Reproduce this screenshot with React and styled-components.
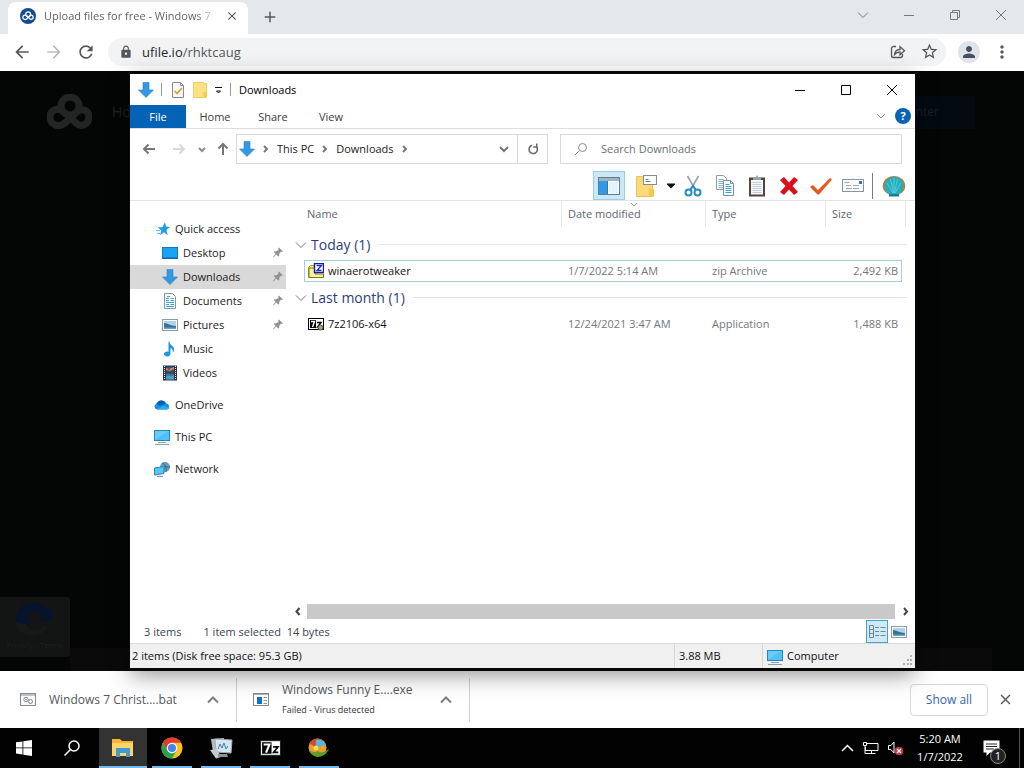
import React, { Fragment } from "react";
import styled, { createGlobalStyle } from "styled-components";
import {
  MdArrowBack,
  MdArrowForward,
  MdRefresh,
  MdLock,
  MdPerson,
  MdMoreVert,
  MdStarBorder,
  MdAdd,
  MdClose,
} from "react-icons/md";

const GlobalStyle = createGlobalStyle`
  * {
    box-sizing: border-box;
  }
  body {
    margin: 0;
    font-family: "Open Sans", "Noto Sans", sans-serif;
    font-size: 11px;
    line-height: 16px;
    color: #1b1b1b;
    overflow: hidden;
  }
  button, input {
    font: inherit;
    color: inherit;
  }
  svg {
    display: block;
    flex: none;
  }
`;

/* ---------- icons ---------- */

const Line = ({ d, w = 12, h = w, stroke = "currentColor", sw = 1 }) => (
  <svg width={w} height={h} viewBox={`0 0 ${w} ${h}`} fill="none" stroke={stroke} strokeWidth={sw}>
    <path d={d} />
  </svg>
);

const CloudLogo = ({ size, color, sw }) => (
  <svg width={size} height={size * 0.8} viewBox="0 0 45 36" fill="none" stroke={color} strokeWidth={sw}>
    <circle cx="23" cy="12" r="9" />
    <path d="M17 18 L29 29 C34 34 42 30 42 23 C42 17 36 14 31 17 L18 29 C11 35 3 30 3 23 C3 17 9 13 15 17" />
  </svg>
);

const DownArrow = ({ size = 16 }) => (
  <svg width={size} height={size} viewBox="0 0 16 16">
    <path d="M5 0.5h6V8h4.5L8 15.5 0.5 8H5z" fill="#3598e4" stroke="#2b7fc4" strokeWidth="0.6" />
  </svg>
);

const CheckPage = () => (
  <svg width="16" height="16" viewBox="0 0 16 16">
    <path d="M2.5 0.5h8l3 3v12h-11z" fill="#f8f8f8" stroke="#8a8a8a" />
    <path d="M10.5 0.5v3h3" fill="none" stroke="#8a8a8a" />
    <path d="M4.5 9l2.500 2.500 5-5.500" fill="none" stroke="#d6a02a" strokeWidth="1.600" />
  </svg>
);

const Folder = () => (
  <svg width="14" height="16" viewBox="0 0 14 16">
    <path d="M0.5 0.5h10v1h3v14H0.5z" fill="#fedf82" stroke="#eccb6a" />
    <path d="M10.5 10h3v5.5h-3z" fill="#f7cb51" />
  </svg>
);

const Monitor = () => (
  <svg width="16" height="16" viewBox="0 0 16 16">
    <rect x="0.5" y="1.5" width="15" height="10" fill="#4fc0f8" stroke="#2487b8" />
    <path d="M1 11V2h13z" fill="#7bd2fb" opacity="0.6" />
    <path d="M4 13.5h8M1 15.5h14" stroke="#8aa0ac" />
  </svg>
);

const sideIcons = {
  star: (
    <svg width="16" height="16" viewBox="-2 0 16 16">
      <path d="M9 1l1 4.600 4 .4-3.600 3 1.300 5.200L8 11.200 4 14.200l1.300-4.700L2 6.400l4.600-.4z" fill="#1f9bea" />
      <path d="M0 9.500h4M1 12.500h3M2 6.500h3" stroke="#5bb7f0" />
    </svg>
  ),
  desktop: (
    <svg width="16" height="14" viewBox="0 0 16 14">
      <rect x="0.5" y="1.5" width="15" height="11" fill="#18a3f7" stroke="#1577b8" />
      <path d="M1 12h14" stroke="#0d5c94" />
    </svg>
  ),
  down: <DownArrow />,
  doc: (
    <svg width="16" height="16" viewBox="0 0 16 16">
      <path d="M2.500 0.500h8l3 3v12h-11z" fill="#fff" stroke="#8796a3" />
      <path d="M4 5.500h3M4 7.500h3M8.500 5.500h3.500M8.500 7.500H12M4 9.500h8M4 11.500h3M8.500 11.500H12M4 13.500h8M5 3.500h3" stroke="#3aa3d8" />
    </svg>
  ),
  picture: (
    <svg width="16" height="14" viewBox="0 0 16 14">
      <rect x="0.500" y="1.500" width="15" height="11" fill="#fff" stroke="#8b9aa5" />
      <rect x="2" y="3" width="12" height="8" fill="#a9d3f1" />
      <path d="M2 5c4 0 6 3 12 3v3H2z" fill="#3d6e8e" />
      <path d="M2 9.500h12V11H2z" fill="#5fa6cf" />
    </svg>
  ),
  music: (
    <svg width="16" height="16" viewBox="0 0 16 16">
      <path d="M7.500 0.500c0 4 5 4 4.500 8.500-.2 1-.7 2-1.500 2.500.6-3-.5-4-2-4.500v5.500c0 4-6.500 4-6.500.6 0-2 2.500-3 4.500-2.200V.5z" fill="#1f97dc" />
    </svg>
  ),
  video: (
    <svg width="16" height="16" viewBox="0 0 16 16">
      <rect x="1" y="0.500" width="14" height="15" fill="#35343a" />
      <path d="M2.500 1v14M13.500 1v14" stroke="#e8e8e8" strokeDasharray="1 1" />
      <rect x="4" y="1.500" width="8" height="6" fill="#2c4f93" />
      <rect x="4" y="8.500" width="8" height="6" fill="#3178b9" />
      <path d="M4 3l3 1 5-2v2L8 6 4 5z" fill="#d39036" />
      <path d="M4 12c3-3 5 1 8-2v4.500H4z" fill="#48a1c6" />
      <path d="M6 4.500h2M9 9.500h3" stroke="#c43d3d" />
    </svg>
  ),
  cloud: (
    <svg width="16" height="16" viewBox="0 0 16 16">
      <path d="M3 12.500a3 3 0 0 1-.5-5.800A5.200 5.200 0 0 1 12 6.300a3.200 3.200 0 0 1 1 6.200z" fill="#1490df" />
      <path d="M2.500 6.700A5.200 5.200 0 0 1 12 6.300L6 9z" fill="#0a5fb0" />
      <path d="M3 12.500L9.500 8.500l6 2.500a3 3 0 0 1-2.500 1.500z" fill="#2badf0" />
    </svg>
  ),
  pc: <Monitor />,
  network: (
    <svg width="16" height="16" viewBox="0 0 16 16">
      <circle cx="11" cy="6" r="5" fill="#5f9fba" />
      <path d="M8 2c3 1 5 4 4 9M7 7c4-2 7-1 9-1" stroke="#2f6d8c" fill="none" />
      <path d="M0.500 7l9.500-1.500v7L0.500 14z" fill="#5ac4f7" stroke="#2a83b3" />
      <path d="M3 15.500h6" stroke="#7f98a6" />
    </svg>
  ),
};

const Pin = () => (
  <svg width="10" height="12" viewBox="0 0 10 12">
    <path d="M6 0.500l3.800 3.800-1 .6-.8-.2-1.800 2 .1 2.100-.9.800L3.200 7.500.500 10.500 0 10l2.500-3L.700 5l.900-.8 2.100.1L5.500 2.500l-.2-1z" fill="#8c949b" />
  </svg>
);

const ZipFile = () => (
  <svg width="16" height="16" viewBox="0 0 16 16">
    <path d="M0.500 4.500l2-2H7v12H0.500z" fill="#f5ee84" stroke="#a79c2f" />
    <path d="M1 14.500h14.500V11H7V5H1z" fill="#f8f29a" stroke="#7d7520" />
    <rect x="6.500" y="0.500" width="9" height="9" fill="#fff" stroke="#161a9c" strokeWidth="1.400" />
    <path d="M8.500 2.500h5l-4.500 5h4.500" fill="none" stroke="#2329c9" strokeWidth="1.400" />
  </svg>
);

const SevenZip = ({ w = 16, h = 12 }) => (
  <svg width={w} height={h} viewBox="0 0 20 15">
    <rect x="0.500" y="0.500" width="19" height="14" fill="#fff" stroke="#222" />
    <path d="M2 2h9v11H2z" fill="#050505" />
    <path d="M3.500 4.200h5.500L5.800 12" stroke="#fff" strokeWidth="2" fill="none" />
    <path d="M12.500 6.500h4.500l-4 5.200h4.500" stroke="#050505" strokeWidth="1.700" fill="none" />
  </svg>
);

const SevenSetup = () => (
  <svg width="16" height="14" viewBox="0 0 16 14">
    <rect x="0.500" y="1.500" width="15" height="11" fill="#fff" stroke="#000" />
    <path d="M2 3h6v8H2z" fill="#050505" />
    <path d="M3 4.500h3.500L4.500 10" stroke="#fff" strokeWidth="1.400" fill="none" />
    <path d="M9 5.500h4L9.500 10H12" stroke="#050505" strokeWidth="1.400" fill="none" />
    <circle cx="12.500" cy="10.500" r="2.500" fill="#a9a37c" stroke="#55534a" />
  </svg>
);

const toolIcons = {
  pane: (
    <svg width="22" height="18" viewBox="0 0 22 18">
      <rect x="0.500" y="0.500" width="21" height="17" fill="#fff" stroke="#5f7d92" />
      <rect x="1" y="1" width="20" height="3" fill="#9db6c6" />
      <rect x="1" y="4" width="8" height="13" fill="#2e9be8" />
      <path d="M9.500 4v13" stroke="#48718e" />
      <rect x="11" y="5" width="9" height="11" fill="#e3f4ff" />
    </svg>
  ),
  organize: (
    <svg width="22" height="22" viewBox="0 0 22 22">
      <path d="M0.500 1.500h9v3h7v17h-16z" fill="#fdda78" stroke="#eac35a" />
      <path d="M13 14h5v7.500h-5z" fill="#f4c64c" />
      <rect x="7.500" y="0.500" width="13" height="9" fill="#fff" stroke="#8b8b8b" />
      <path d="M9.500 4.500h3M9.500 6.500h5" stroke="#4d7ea5" />
    </svg>
  ),
  cut: (
    <svg width="18" height="22" viewBox="0 0 18 22" fill="none">
      <path d="M3.500 1l8 14M14.500 1l-8 14" stroke="#9aa2a8" strokeWidth="1.600" />
      <circle cx="4.500" cy="17.500" r="3" stroke="#258fbd" strokeWidth="2" />
      <circle cx="13.500" cy="17.500" r="3" stroke="#258fbd" strokeWidth="2" />
      <path d="M6 15l3-4 3 4" stroke="#258fbd" strokeWidth="2" />
    </svg>
  ),
  copy: (
    <svg width="20" height="22" viewBox="0 0 20 22">
      <path d="M1.500 0.500h7l3 3v11h-10z" fill="#fff" stroke="#8c9ba7" />
      <path d="M3.500 4.500h5M3.500 6.500h6M3.500 8.500h6M3.500 10.500h6M3.500 12.500h6" stroke="#84b3d3" />
      <path d="M8.500 5.500h7l3 3v12h-10z" fill="#fff" stroke="#7b8f9e" />
      <path d="M15.500 5.500v3h3" fill="none" stroke="#7b8f9e" />
      <path d="M10.500 9.500h4M10.500 11.500h6M10.500 13.500h6M10.500 15.500h6M10.500 17.500h6" stroke="#3e9bd0" />
    </svg>
  ),
  paste: (
    <svg width="18" height="22" viewBox="0 0 18 22">
      <rect x="1" y="2.500" width="16" height="19" fill="#54453c" />
      <rect x="3" y="5" width="12" height="14.500" fill="#f5f8fb" />
      <path d="M5 2.500h2.500L9 0l1.500 2.500H13V5H5z" fill="#9ba3aa" />
      <path d="M4.500 7.500h9M4.500 9.500h9M4.500 11.500h9M4.500 13.500h9M4.500 15.500h9M4.500 17.500h9" stroke="#c3ced8" />
    </svg>
  ),
  remove: (
    <svg width="20" height="20" viewBox="0 0 20 20">
      <path d="M1 4l4-3 5 5.500L15 1l4 3-5.500 6 5.500 6-4 3-5-5.500L5 19l-4-3 5.500-6z" fill="#d90f1c" />
    </svg>
  ),
  check: (
    <svg width="22" height="20" viewBox="0 0 22 20">
      <path d="M0 11l3-2 5 5L20 2l2 1.500L9 18.500H7.500z" fill="#e2591c" />
    </svg>
  ),
  props: (
    <svg width="22" height="14" viewBox="0 0 22 14">
      <rect x="0.500" y="0.500" width="21" height="12" fill="#fff" stroke="#8a949b" />
      <path d="M2.500 3.500h5M4 6.500h5M11 6.500h6M4 9.500h6M11 9.500h6" stroke="#98a9b5" />
      <rect x="17" y="2" width="3" height="3" fill="#3071b8" />
    </svg>
  ),
  shell: (
    <svg width="24" height="22" viewBox="0 0 24 22">
      <path d="M8 20C2 17 0 14 1 9 2 4 7 1 12 1s10 3 11 8c1 5-1 8-7 11z" fill="#b57b4a" />
      <path d="M7 19C4 17 2 13 3 9 5 4 8 2 12 2s8 2 9 7c.5 4-1 8-4 10z" fill="#22afc0" />
      <path d="M11 18L5 8M11.500 18L8.500 4M12 18V3M12.500 18l3-14M13 18l6-10" stroke="#6fd6dc" strokeWidth="0.700" fill="none" />
      <path d="M7 19h10v2.500H7z" fill="#148191" />
    </svg>
  ),
};

const DetailsIcon = () => (
  <svg width="18" height="14" viewBox="0 0 18 14" fill="none" stroke="#6b8797">
    <path d="M1.500 0.500h4v12h-4zM1.500 4.500h4M1.500 8.500h4" />
    <path d="M7 2.500h4M12.500 2.500h5M7 6.500h4M12.500 6.500h5M7 10.500h4M12.500 10.500h5" strokeWidth="1.200" />
  </svg>
);

const ChromeIcon = () => (
  <svg width="22" height="22" viewBox="0 0 24 24">
    <circle cx="12" cy="12" r="11.500" fill="#fbc116" />
    <path d="M12 6.250H22A11.500 11.500 0 0 0 2 6.250L7 15z" fill="#e33b2e" />
    <path d="M2 6.250L7 15l5 2.700 5-2.700-5 8.500A11.500 11.500 0 0 1 2 6.250z" fill="#2ba24c" />
    <circle cx="12" cy="12" r="5.700" fill="#fff" />
    <circle cx="12" cy="12" r="4.400" fill="#4285f0" />
  </svg>
);

const taskIcons = {
  start: (
    <svg width="16" height="16" viewBox="0 0 16 16" fill="#fff">
      <path d="M0 2.300l6.500-.9v6.100H0zM7.300 1.300L16 0v7.500H7.300zM0 8.300h6.500v6.200L0 13.600zM7.300 8.300H16V16l-8.700-1.300z" />
    </svg>
  ),
  search: (
    <svg width="16" height="16" viewBox="0 0 16 16" fill="none" stroke="#fff" strokeWidth="1.500">
      <circle cx="10" cy="6" r="5" />
      <path d="M6.500 9.500L0.500 15.500" />
    </svg>
  ),
  explorer: (
    <svg width="22" height="20" viewBox="0 0 22 20">
      <path d="M0 1h8l2 2h11v15H0z" fill="#f4b72f" />
      <path d="M0 5h21v13H0z" fill="#fdd667" />
      <path d="M4 10h14v9h-4v-4H8v4H4z" fill="#419ad0" />
      <path d="M8 15h6v2H8z" fill="#fdd667" />
    </svg>
  ),
  chrome: <ChromeIcon />,
  monitor: (
    <svg width="24" height="22" viewBox="0 0 24 22">
      <path d="M2 2l13-1 1 13-12 1z" fill="#b6bcbf" />
      <path d="M6 2l17 1-1 13-15-1z" fill="#dfe5e8" stroke="#a4abb0" />
      <path d="M8 5l12 .5-.5 8.500L9 13.500z" fill="#cfe5ef" />
      <path d="M9 12l2-5 2 4 2-5 2 6 2-3" stroke="#3889ad" fill="none" />
      <path d="M1 13l7-1 4 8-5 1.500z" fill="#c4cacc" />
      <path d="M9 17h9l1 3H9z" fill="#8d9498" />
    </svg>
  ),
  seven: <SevenZip w={21} h={16} />,
  tweaker: (
    <svg width="22" height="20" viewBox="0 0 22 20">
      <circle cx="9.500" cy="9.500" r="9" fill="#e8a12f" />
      <path d="M1 6C4 0 11-1 16 3 9 2 7 7 9 12 6 8 4 6 1 6z" fill="#d34a26" />
      <path d="M8 2c6-2 10 3 10 7-3-3-7-1-8 2C8 8 7 5 8 2z" fill="#55b4e0" />
      <path d="M1 12c3 2 6 3 9 1 4 3 8 0 11-2-2 5-7 8-12 8-4-1-7-4-8-7z" fill="#5f9c2a" />
      <circle cx="8" cy="10" r="2.500" fill="#f6df54" />
    </svg>
  ),
};

/* ---------- browser ---------- */

const Browser = () => (
  <Fragment>
    <TabStrip>
      <Tab>
        <Favicon>
          <CloudLogo size={12} color="#fff" sw={5} />
        </Favicon>
        <TabTitle>Upload files for free - Windows 7</TabTitle>
        <PlainButton aria-label="Close tab">
          <MdClose size={14} />
        </PlainButton>
      </Tab>
      <NewTab aria-label="New tab">
        <MdAdd size={18} />
      </NewTab>
      <WindowButton aria-label="Search tabs">
        <Line d="M1 3.500l5 5 5-5" />
      </WindowButton>
      <WindowButton aria-label="Minimize">
        <Line d="M1 6.500h10" />
      </WindowButton>
      <WindowButton aria-label="Restore">
        <Line d="M1.500 3.500h7v7h-7zM3.500 3.500v-2h7v7h-2" />
      </WindowButton>
      <WindowButton aria-label="Close">
        <Line d="M1 1l10 10M11 1L1 11" />
      </WindowButton>
    </TabStrip>
    <AddressBar>
      <PlainButton aria-label="Back">
        <MdArrowBack size={20} />
      </PlainButton>
      <PlainButton aria-label="Forward" $color="#b9bcbe">
        <MdArrowForward size={20} />
      </PlainButton>
      <PlainButton aria-label="Reload">
        <MdRefresh size={20} />
      </PlainButton>
      <Omnibox>
        <MdLock size={14} />
        <Url>
          <b>ufile.io</b>/rhktcaug
        </Url>
        <PlainButton aria-label="Share">
          <svg width="16" height="16" viewBox="0 0 16 16" fill="none" stroke="currentColor" strokeWidth="1.300">
            <path d="M6 2.500H3.500a2 2 0 0 0-2 2v7a2 2 0 0 0 2 2h7a2 2 0 0 0 2-2V10" />
            <path d="M4.500 10.500c.5-3.500 2.500-5 5.500-5V2.800l4.500 4-4.500 4V8c-2.500 0-4 .8-5.500 2.500z" />
          </svg>
        </PlainButton>
        <PlainButton aria-label="Bookmark">
          <MdStarBorder size={19} />
        </PlainButton>
      </Omnibox>
      <Avatar aria-label="Profile">
        <MdPerson size={18} />
      </Avatar>
      <PlainButton aria-label="Menu">
        <MdMoreVert size={20} />
      </PlainButton>
    </AddressBar>
  </Fragment>
);

const WebPage = () => (
  <Page>
    <PageHeader>
      <CloudLogo size={45} color="#232424" sw={7} />
      <PageLink href="#">Home</PageLink>
      <PageButton>Enter</PageButton>
    </PageHeader>
    <PageFooter>
      <Captcha>
        <svg width="42" height="36" viewBox="0 0 42 36">
          <path d="M2 20C2 8 10 2 20 2c6 0 10 2 13 6l5-3v15H24l5-5c-5-6-13-5-16 1l5 4-6 6z" fill="#07122b" />
          <path d="M2 22l10 1c3 7 14 7 18 1l4 4C24 38 6 38 2 22z" fill="#171919" />
        </svg>
        <span>Privacy - Terms</span>
      </Captcha>
      <FooterStrip />
    </PageFooter>
  </Page>
);

const Downloads = () => (
  <Shelf>
    <ShelfItem>
      <svg width="16" height="14" viewBox="0 0 16 14" fill="none" stroke="#858a8e">
        <rect x="0.500" y="0.500" width="15" height="12" fill="#fafafa" />
        <path d="M1 2h14" />
        <circle cx="6" cy="6.500" r="2.200" />
        <circle cx="10.500" cy="8.500" r="2" />
        <circle cx="6" cy="6.500" r="0.500" />
      </svg>
      <ShelfText>Windows 7 Christ....bat</ShelfText>
      <PlainButton aria-label="Options">
        <Line d="M1 8.500l5-5 5 5" sw={2} stroke="#7c8084" />
      </PlainButton>
    </ShelfItem>
    <ShelfItem>
      <svg width="16" height="14" viewBox="0 0 16 14">
        <rect x="0.500" y="0.500" width="15" height="12" fill="#fff" stroke="#83898e" />
        <path d="M1 1.500h14" stroke="#aab0b4" />
        <rect x="4" y="4" width="5" height="7" fill="#0a74c4" />
        <path d="M10.500 4.500H14M10.500 7.500H14M10.500 10.500H14" stroke="#8b9298" />
      </svg>
      <ShelfText>
        Windows Funny E....exe
        <small>Failed - Virus detected</small>
      </ShelfText>
      <PlainButton aria-label="Options">
        <Line d="M1 8.500l5-5 5 5" sw={2} stroke="#7c8084" />
      </PlainButton>
    </ShelfItem>
    <ShowAll>Show all</ShowAll>
    <PlainButton aria-label="Close downloads bar">
      <MdClose size={17} />
    </PlainButton>
  </Shelf>
);

/* ---------- explorer ---------- */

const places = [
  { name: "Quick access", icon: "star" },
  { name: "Desktop", icon: "desktop", sub: true, pin: true },
  { name: "Downloads", icon: "down", sub: true, pin: true, active: true },
  { name: "Documents", icon: "doc", sub: true, pin: true },
  { name: "Pictures", icon: "picture", sub: true, pin: true },
  { name: "Music", icon: "music", sub: true },
  { name: "Videos", icon: "video", sub: true },
  { name: "OneDrive", icon: "cloud", gap: true },
  { name: "This PC", icon: "pc", gap: true },
  { name: "Network", icon: "network", gap: true },
];

const groups = [
  {
    title: "Today (1)",
    files: [
      { name: "winaerotweaker", date: "1/7/2022 5:14 AM", type: "zip Archive", size: "2,492 KB", icon: <ZipFile />, selected: true },
    ],
  },
  {
    title: "Last month (1)",
    files: [
      { name: "7z2106-x64", date: "12/24/2021 3:47 AM", type: "Application", size: "1,488 KB", icon: <SevenSetup /> },
    ],
  },
];

const tools = ["cut", "copy", "paste", "remove", "check", "props"];

const Explorer = () => (
  <ExplorerWindow>
    <TitleBar>
      <DownArrow />
      <Separator />
      <CheckPage />
      <Folder />
      <Line d="M1 3.500h7M2.500 7h4L4.500 9z" w={9} h={12} stroke="#111" />
      <Separator />
      <Title>Downloads</Title>
      <CaptionButton aria-label="Minimize">
        <Line d="M1 6.500h10" stroke="#000" />
      </CaptionButton>
      <CaptionButton aria-label="Maximize">
        <Line d="M1.500 1.500h9v9h-9z" stroke="#000" />
      </CaptionButton>
      <CaptionButton aria-label="Close">
        <Line d="M1 1l10 10M11 1L1 11" stroke="#000" />
      </CaptionButton>
    </TitleBar>
    <Ribbon>
      <RibbonTab $file>File</RibbonTab>
      <RibbonTab>Home</RibbonTab>
      <RibbonTab>Share</RibbonTab>
      <RibbonTab>View</RibbonTab>
      <RibbonEnd>
        <Line d="M1 4l4 4 4-4" w={10} h={12} stroke="#8a8a8a" />
        <Help aria-label="Help">?</Help>
      </RibbonEnd>
    </Ribbon>
    <NavRow>
      <NavButtons>
        <Line d="M13 7H2M6.500 2.500L2 7l4.500 4.500" w={14} stroke="#777" sw={2} />
        <Line d="M1 7h11M7.500 2.500L12 7l-4.500 4.500" w={14} stroke="#d8d8d8" sw={2} />
        <Line d="M1 3l3 3 3-3" w={8} stroke="#8d8d8d" sw={2} />
        <Line d="M7 13V2M2.500 6.500L7 2l4.500 4.500" w={14} stroke="#777" sw={2} />
      </NavButtons>
      <PathBox>
        <DownArrow />
        <Line d="M1 1l3 3-3 3" w={6} h={8} stroke="#777" sw={2} />
        <Crumb>This PC</Crumb>
        <Line d="M1 1l3 3-3 3" w={6} h={8} stroke="#777" sw={2} />
        <Crumb>Downloads</Crumb>
        <Line d="M1 1l3 3-3 3" w={6} h={8} stroke="#777" sw={2} />
        <PathEnd>
          <Line d="M1 4l4 4 4-4" w={10} h={12} stroke="#777" sw={2} />
        </PathEnd>
        <Refresh aria-label="Refresh">
          <svg width="12" height="12" viewBox="0 0 12 12" fill="none" stroke="#666" strokeWidth="1.500">
            <path d="M9.300 3.500A4.200 4.200 0 1 1 5 2.300" />
            <path d="M9.800 0.500v3.500H6.300" />
          </svg>
        </Refresh>
      </PathBox>
      <SearchBox>
        <svg width="14" height="14" viewBox="0 0 14 14" fill="none" stroke="#8b8b8b">
          <circle cx="8.500" cy="5.500" r="4" />
          <path d="M5.500 8.500L1 13" />
        </svg>
        <input type="search" aria-label="Search Downloads" placeholder="Search Downloads" />
      </SearchBox>
    </NavRow>
    <ToolRow>
      <ToolButton $on aria-label="Navigation pane">
        {toolIcons.pane}
      </ToolButton>
      <ToolButton $wide aria-label="Organize">
        {toolIcons.organize}
        <Line d="M1.500 1.500h5L4 4z" w={8} h={6} stroke="#111" sw={2} />
      </ToolButton>
      {tools.map((name) => (
        <ToolButton key={name} aria-label={name}>
          {toolIcons[name]}
        </ToolButton>
      ))}
      <ToolRule />
      <ToolButton aria-label="Classic Shell">{toolIcons.shell}</ToolButton>
    </ToolRow>
    <Body>
      <Sidebar>
        {places.map((p) => (
          <Place key={p.name} $sub={p.sub} $gap={p.gap} $active={p.active}>
            <PlaceIcon>{sideIcons[p.icon]}</PlaceIcon>
            <span>{p.name}</span>
            {p.pin && <Pin />}
          </Place>
        ))}
      </Sidebar>
      <FilePane>
        <FileTable>
          <thead>
            <HeadRow>
              <th>Name</th>
              <th>
                <SortMark>
                  <Line d="M1 1l3 3 3-3" w={8} h={5} stroke="#9a9a9a" />
                </SortMark>
                Date modified
              </th>
              <th>Type</th>
              <th>Size</th>
            </HeadRow>
          </thead>
          {groups.map((g) => (
            <tbody key={g.title}>
              <GroupRow>
                <th colSpan={4}>
                  <Line d="M1 3.500l5 5 5-5" stroke="#777" />
                  {g.title}
                </th>
              </GroupRow>
              {g.files.map((f) => (
                <FileRow key={f.name} $selected={f.selected}>
                  <td>
                    {f.icon}
                    {f.name}
                  </td>
                  <td>{f.date}</td>
                  <td>{f.type}</td>
                  <td>{f.size}</td>
                </FileRow>
              ))}
            </tbody>
          ))}
        </FileTable>
        <ScrollBar>
          <Line d="M7.500 2l-3 3.500 3 3.500" w={9} h={11} stroke="#444" sw={2} />
          <Thumb />
          <Line d="M3 2l3 3.500L3 9" w={9} h={11} stroke="#444" sw={2} />
        </ScrollBar>
      </FilePane>
    </Body>
    <Status>
      <span>3 items</span>
      <span>1 item selected&nbsp; 14 bytes</span>
      <ViewButton $on aria-label="Details view">
        <DetailsIcon />
      </ViewButton>
      <ViewButton aria-label="Large icons view">{sideIcons.picture}</ViewButton>
    </Status>
    <ClassicStatus>
      <span>2 items (Disk free space: 95.3 GB)</span>
      <span>3.88 MB</span>
      <span>
        <Monitor />
        Computer
      </span>
      <svg width="10" height="10" viewBox="0 0 10 10" fill="#b0b0b0">
        <path d="M7 0h2v2H7zM4 4h2v2H4zM7 4h2v2H7zM0 8h2v2H0zM4 8h2v2H4zM7 8h2v2H7z" />
      </svg>
    </ClassicStatus>
  </ExplorerWindow>
);

/* ---------- taskbar ---------- */

const Taskbar = () => (
  <Bar>
    <TaskButton aria-label="Start">{taskIcons.start}</TaskButton>
    <TaskButton aria-label="Search">{taskIcons.search}</TaskButton>
    <OpenApps>
      <TaskButton $open $active aria-label="File Explorer">{taskIcons.explorer}</TaskButton>
      <TaskButton $open aria-label="Chrome">{taskIcons.chrome}</TaskButton>
      <TaskButton $open aria-label="Monitor">{taskIcons.monitor}</TaskButton>
      <TaskButton $open aria-label="7-Zip">{taskIcons.seven}</TaskButton>
      <TaskButton $open aria-label="Tweaker">{taskIcons.tweaker}</TaskButton>
    </OpenApps>
    <Tray>
      <Line d="M1 9l5.500-5.500L12 9" w={13} sw={1.500} />
      <svg width="17" height="16" viewBox="0 0 17 16" fill="none" stroke="#fff">
        <path d="M5 3.500h11v7H3.500V7M9.500 10.500v3M5.500 13.500h8M1.500 2.500h3v3h-3zM3 6v7.500h3" />
      </svg>
      <svg width="17" height="16" viewBox="0 0 17 16">
        <path d="M1.500 5.500H4L7 2v11l-3-3.500H1.500z" fill="none" stroke="#fff" />
        <rect x="8" y="7" width="8" height="8" rx="3" fill="#c93343" />
        <path d="M10 9l4 4M14 9l-4 4" stroke="#fff" strokeWidth="1.200" />
      </svg>
      <Clock>
        5:20 AM
        <br />
        1/7/2022
      </Clock>
      <Notices aria-label="Notifications">
        <svg width="17" height="17" viewBox="0 0 17 17">
          <path d="M0.500 0.500h16v12H7L3.500 16v-3.500h-3z" fill="#fff" />
          <path d="M3 4h11M3 6.500h11M3 9h8" stroke="#222" />
        </svg>
        <Badge>1</Badge>
      </Notices>
    </Tray>
  </Bar>
);

const App = () => (
  <Screen>
    <GlobalStyle />
    <Browser />
    <WebPage />
    <Downloads />
    <Taskbar />
    <Explorer />
  </Screen>
);

const Screen = styled.div`
  position: relative;
  display: flex;
  flex-direction: column;
  height: 100vh;
  background: #fff;
`;

const PlainButton = styled.button`
  display: flex;
  align-items: center;
  justify-content: center;
  padding: 0;
  border: 0;
  background: none;
  color: ${(p) => p.$color || "#54585c"};
`;

const TabStrip = styled.div`
  display: flex;
  height: 34px;
  padding-left: 8px;
  background: #e4e8ea;
`;

const Tab = styled.div`
  display: flex;
  align-items: center;
  gap: 8px;
  width: 240px;
  margin-top: 2px;
  padding: 0 9px 4px 12px;
  border-radius: 8px 8px 0 0;
  background: #fff;
`;

const Favicon = styled.span`
  display: flex;
  align-items: center;
  justify-content: center;
  width: 16px;
  height: 16px;
  border-radius: 50%;
  background: #134b8c;
`;

const TabTitle = styled.span`
  flex: 1;
  overflow: hidden;
  white-space: nowrap;
  color: #606468;
  mask-image: linear-gradient(90deg, #000 88%, transparent);
`;

const NewTab = styled(PlainButton)`
  width: 44px;
  margin-right: auto;
`;

const WindowButton = styled(PlainButton)`
  width: 46px;
  height: 29px;
  color: #777b7e;
`;

const AddressBar = styled.div`
  display: flex;
  align-items: center;
  gap: 12px;
  height: 37px;
  padding: 0 12px 2px;
  background: #fff;
`;

const Omnibox = styled.div`
  flex: 1;
  display: flex;
  align-items: center;
  gap: 14px;
  height: 28px;
  padding: 0 7px 0 11px;
  border-radius: 14px;
  background: #f1f3f4;
  color: #54585c;
`;

const Url = styled.span`
  flex: 1;
  margin-left: -5px;
  font-size: 13px;
  b {
    font-weight: 400;
    color: #25282b;
  }
`;

const Avatar = styled(PlainButton)`
  width: 22px;
  height: 22px;
  border-radius: 50%;
  background: #dfe3ea;
  color: #485061;
`;

const Page = styled.main`
  flex: 1;
  display: flex;
  flex-direction: column;
  justify-content: space-between;
  min-height: 0;
  background: #040505;
`;

const PageHeader = styled.header`
  display: flex;
  align-items: center;
  gap: 20px;
  padding: 23px 49px 0 47px;
`;

const PageLink = styled.a`
  font-size: 14px;
  color: #222;
  text-decoration: none;
`;

const PageButton = styled.button`
  width: 100px;
  height: 33px;
  margin-left: auto;
  padding: 0 36px 0 0;
  border: 0;
  background: #030a12;
  color: #1b1f24;
  font-size: 12px;
  text-align: right;
`;

const PageFooter = styled.footer`
  display: flex;
  align-items: flex-end;
  padding-right: 32px;
`;

const Captcha = styled.div`
  display: flex;
  flex-direction: column;
  align-items: center;
  width: 70px;
  height: 60px;
  margin-bottom: 14px;
  padding-top: 4px;
  border-radius: 0 3px 3px 0;
  background: #131414;
  color: #1e2020;
  font-size: 8px;
`;

const FooterStrip = styled.div`
  flex: 1;
  height: 23px;
  background: #0a0a0a;
`;

const Shelf = styled.div`
  display: flex;
  align-items: center;
  height: 57px;
  padding-right: 10px;
  background: #fff;
`;

const ShelfItem = styled.div`
  display: flex;
  align-items: center;
  gap: 13px;
  height: 44px;
  width: 237px;
  padding: 0 17px 0 20px;
  border-right: 1px solid #cfd1d3;
  & + & {
    width: 233px;
    padding-left: 16px;
  }
`;

const ShelfText = styled.span`
  flex: 1;
  font-size: 12px;
  line-height: 20px;
  white-space: nowrap;
  color: #54585c;
  small {
    display: block;
    font-size: 9px;
    color: #333;
  }
`;

const ShowAll = styled.button`
  width: 78px;
  height: 32px;
  margin: 0 9px 0 auto;
  padding: 0;
  border: 1px solid #d5d8dc;
  border-radius: 4px;
  background: #fff;
  color: #3564b0;
  font-size: 12px;
`;

const ExplorerWindow = styled.section`
  position: absolute;
  inset: 74px 109px 100px 130px;
  display: flex;
  flex-direction: column;
  background: #fff;
  box-shadow: 0 0 0 1px #0a0a0a, 0 6px 22px rgba(0, 0, 0, 0.45);
`;

const TitleBar = styled.div`
  display: flex;
  align-items: center;
  gap: 7px;
  height: 31px;
  padding-left: 8px;
`;

const Separator = styled.span`
  width: 1px;
  height: 13px;
  margin-right: 1px;
  background: #999;
`;

const Title = styled.span`
  flex: 1;
  color: #000;
`;

const CaptionButton = styled(PlainButton)`
  width: 39px;
  height: 30px;
  &:last-child {
    margin-right: 4px;
  }
`;

const Ribbon = styled.div`
  display: flex;
  height: 24px;
  border-bottom: 1px solid #dcdddf;
`;

const RibbonTab = styled.button`
  width: ${(p) => (p.$file ? 56 : 58)}px;
  padding: 0;
  border: 0;
  background: ${(p) => (p.$file ? "#0563b5" : "none")};
  color: ${(p) => (p.$file ? "#fff" : "#3b3b3b")};
`;

const RibbonEnd = styled.div`
  display: flex;
  align-items: center;
  gap: 9px;
  margin-left: auto;
  padding: 0 4px 2px 0;
`;

const Help = styled.button`
  width: 16px;
  height: 16px;
  padding: 0;
  border: 0;
  border-radius: 50%;
  background: #0c63b4;
  color: #fff;
  font-weight: 700;
  line-height: 16px;
`;

const NavRow = styled.div`
  display: grid;
  grid-template-columns: 106px 312fr 354fr;
  align-items: center;
  height: 42px;
  padding: 0 13px 2px 0;
`;

const NavButtons = styled.div`
  display: flex;
  align-items: center;
  gap: 12px;
  padding-left: 12px;
  svg:first-child {
    margin-right: 4px;
  }
  svg:nth-child(3) {
    margin-right: -2px;
  }
`;

const PathBox = styled.div`
  display: flex;
  align-items: center;
  gap: 8px;
  height: 30px;
  padding-left: 2px;
  border: 1px solid #d9d9d9;
`;

const Crumb = styled.span`
  color: #222;
`;

const PathEnd = styled.div`
  margin-left: auto;
`;

const Refresh = styled(PlainButton)`
  width: 30px;
  height: 28px;
  border-left: 1px solid #d9d9d9;
`;

const SearchBox = styled.label`
  display: flex;
  align-items: center;
  gap: 13px;
  height: 30px;
  margin-left: 12px;
  padding-left: 13px;
  border: 1px solid #d9d9d9;
  input {
    flex: 1;
    min-width: 0;
    padding: 0;
    border: 0;
    outline: 0;
    background: none;
  }
  input::placeholder {
    color: #6b6f73;
    opacity: 1;
  }
`;

const ToolRow = styled.div`
  display: flex;
  align-items: center;
  justify-content: flex-end;
  height: 30px;
  padding-right: 5px;
  border-bottom: 1px solid #e2e4e6;
`;

const ToolButton = styled.button`
  display: flex;
  align-items: center;
  justify-content: center;
  gap: 9px;
  width: ${(p) => (p.$wide ? 52 : 32)}px;
  height: 29px;
  padding: 0 0 0 ${(p) => (p.$wide ? 8 : 0)}px;
  border: 1px solid ${(p) => (p.$on ? "#9acdea" : "transparent")};
  background: ${(p) => (p.$on ? "#cce8f7" : "none")};
`;

const ToolRule = styled.span`
  width: 1px;
  height: 26px;
  margin: 0 5px 0 3px;
  background: #7b7b7b;
`;

const Body = styled.div`
  flex: 1;
  display: flex;
  min-height: 0;
`;

const Sidebar = styled.nav`
  display: flex;
  flex-direction: column;
  width: 162px;
  padding: 16px 6px 0 0;
`;

const Place = styled.button`
  display: flex;
  align-items: center;
  gap: 5px;
  height: 24px;
  margin-top: ${(p) => (p.$gap ? 8 : 0)}px;
  padding: 0 3px 0 ${(p) => (p.$sub ? 32 : 24)}px;
  border: 0;
  background: ${(p) => (p.$active ? "#d9d9d9" : "none")};
  text-align: left;
  span:nth-child(2) {
    flex: 1;
  }
`;

const PlaceIcon = styled.span`
  display: flex;
  width: 16px;
`;

const FilePane = styled.div`
  flex: 1;
  display: flex;
  flex-direction: column;
  justify-content: space-between;
  min-width: 0;
`;

const FileTable = styled.table`
  display: block;
  thead,
  tbody {
    display: block;
  }
  th,
  td {
    padding: 0;
    font-weight: 400;
    text-align: left;
  }
`;

const HeadRow = styled.tr`
  display: grid;
  grid-template-columns: 1fr 144px 120px 80px;
  height: 25px;
  margin: 0 9px 5px 12px;
  color: #5d6570;
  th {
    position: relative;
    padding-left: 6px;
    line-height: 26px;
    border-right: 1px solid #e6e8ea;
  }
  th:first-child {
    padding-left: 3px;
  }
`;

const SortMark = styled.span`
  position: absolute;
  top: 1px;
  left: 50%;
  transform: translateX(-50%);
`;

const GroupRow = styled.tr`
  display: block;
  padding: 0 8px 0 3px;
  th {
    display: flex;
    align-items: center;
    gap: 4px;
    height: 29px;
    padding-bottom: 2px;
    color: #2c3e7a;
    font-size: 14px;
  }
  th::after {
    content: "";
    flex: 1;
    height: 1px;
    margin-left: 4px;
    background: #e2e7ee;
  }
`;

const FileRow = styled.tr`
  display: grid;
  grid-template-columns: 1fr 144px 120px 76px;
  align-items: center;
  height: 22px;
  margin: 0 13px 2px 12px;
  border: 1px solid ${(p) => (p.$selected ? "#a8cddc" : "transparent")};
  color: #73777b;
  td:first-child {
    display: flex;
    align-items: center;
    gap: 4px;
    padding-left: 3px;
    color: #111;
  }
  td:nth-child(2),
  td:nth-child(3) {
    padding-left: 7px;
  }
  td:last-child {
    padding-right: 3px;
    text-align: right;
  }
`;

const ScrollBar = styled.div`
  display: flex;
  align-items: center;
  gap: 6px;
  height: 17px;
  padding-right: 5px;
`;

const Thumb = styled.div`
  flex: 1;
  height: 15px;
  background: #c9c9c9;
`;

const Status = styled.div`
  display: flex;
  align-items: center;
  height: 23px;
  padding: 0 5px 0 14px;
  color: #3c4450;
  span:nth-child(2) {
    flex: 1;
    margin-left: 22px;
  }
`;

const ViewButton = styled.button`
  display: flex;
  align-items: center;
  justify-content: center;
  width: 22px;
  height: 23px;
  padding: 0;
  border: 1px solid ${(p) => (p.$on ? "#45a3c4" : "transparent")};
  background: ${(p) => (p.$on ? "#cdeaf6" : "none")};
`;

const ClassicStatus = styled.div`
  display: flex;
  align-items: center;
  height: 25px;
  padding: 0 2px;
  border-top: 1px solid #dadada;
  background: #f0f0f0;
  color: #111;
  span {
    display: flex;
    align-items: center;
    gap: 4px;
    height: 24px;
  }
  span:first-child {
    flex: 1;
  }
  span:nth-child(2) {
    width: 88px;
    padding-left: 4px;
    border-left: 1px solid #d7d7d7;
  }
  span:nth-child(3) {
    width: 141px;
    padding-left: 4px;
    border-left: 1px solid #d7d7d7;
  }
  svg:last-child {
    align-self: flex-end;
    margin-bottom: 3px;
  }
`;

const Bar = styled.footer`
  display: flex;
  height: 40px;
  background: #020202;
  color: #fff;
`;

const OpenApps = styled.div`
  display: flex;
  gap: 1px;
  margin-left: 3px;
`;

const TaskButton = styled.button`
  display: flex;
  align-items: center;
  justify-content: center;
  width: 48px;
  padding: 0;
  border: 0;
  background: linear-gradient(#76b9ed, #76b9ed) bottom /
    ${(p) => (p.$open ? (p.$active ? "48px 2px" : "40px 2px") : "0 0")} no-repeat
    ${(p) => (p.$active ? "#333" : "transparent")};
`;

const Tray = styled.div`
  display: flex;
  align-items: center;
  gap: 8px;
  margin-left: auto;
  margin-right: 4px;
  padding-right: 13px;
  border-right: 1px solid #555;
`;

const Clock = styled.time`
  width: 56px;
  font-size: 11px;
  line-height: 18px;
  text-align: center;
`;

const Notices = styled(PlainButton)`
  position: relative;
  width: 30px;
  height: 32px;
`;

const Badge = styled.span`
  position: absolute;
  right: 0;
  bottom: 0;
  width: 16px;
  height: 16px;
  border: 1px solid #888;
  border-radius: 50%;
  background: #222;
  color: #fff;
  line-height: 14px;
`;

export default App;
